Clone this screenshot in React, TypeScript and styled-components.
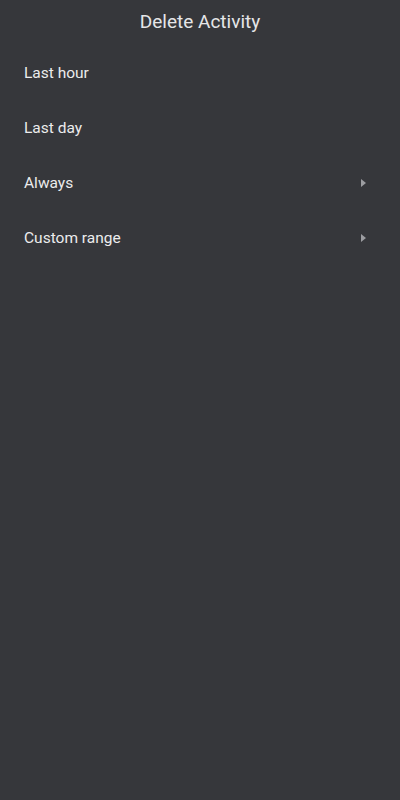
import styled, { createGlobalStyle } from 'styled-components'

const GlobalStyle = createGlobalStyle`
  html, body {
    margin: 0;
    padding: 0;
    background: #36373b;
  }
  body {
    font-family: Roboto, "Noto Sans", sans-serif;
    -webkit-font-smoothing: antialiased;
  }
`

const Screen = styled.div`
  width: 400px;
  height: 800px;
  background: #36373b;
  color: #ececed;
  display: flex;
  flex-direction: column;
`

const Title = styled.h1`
  margin: 0;
  height: 45px;
  display: flex;
  align-items: center;
  justify-content: center;
  font-size: 19px;
  font-weight: 400;
  color: #e6e6e8;
  padding-bottom: 3px;
  box-sizing: border-box;
`

const List = styled.ul`
  list-style: none;
  margin: 0;
  padding: 0;
  display: flex;
  flex-direction: column;
`

const Item = styled.li`
  height: 55px;
  padding: 0 34px 0 24px;
  display: flex;
  align-items: center;
  justify-content: space-between;
  font-size: 15.5px;
  color: #ececed;
`

const Arrow = styled.span`
  width: 0;
  height: 0;
  border-top: 4.5px solid transparent;
  border-bottom: 4.5px solid transparent;
  border-left: 5px solid #9c9da1;
`

const items = [
  { label: 'Last hour', more: false },
  { label: 'Last day', more: false },
  { label: 'Always', more: true },
  { label: 'Custom range', more: true },
]

export default function App() {
  return (
    <>
      <GlobalStyle />
      <Screen>
        <Title>Delete Activity</Title>
        <List>
          {items.map(it => (
            <Item key={it.label}>
              <span>{it.label}</span>
              {it.more && <Arrow />}
            </Item>
          ))}
        </List>
      </Screen>
    </>
  )
}
